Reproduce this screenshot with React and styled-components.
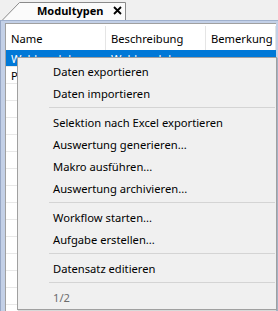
import styled, { createGlobalStyle } from "styled-components"

const GlobalStyle = createGlobalStyle`
  html, body {
    margin: 0;
    padding: 0;
    background: #f0f0f0;
    overflow: hidden;
  }
  body {
    font-family: "Noto Sans", "Open Sans", sans-serif;
    font-size: 11.2px;
    color: #000;
  }
`

const Window = styled.div`
  position: relative;
  width: 278px;
  height: 311px;
  display: flex;
  flex-direction: column;
  background: #f0f0f0;
`

const TabStrip = styled.div`
  height: 20px;
  display: flex;
  align-items: flex-end;
  padding-left: 2px;
`

const Tab = styled.div`
  position: relative;
  width: 124px;
  height: 19px;
  display: flex;
  align-items: center;
  gap: 10px;
  padding-left: 35px;
  box-sizing: border-box;
  font-weight: bold;
  font-size: 11px;

  svg.shape {
    position: absolute;
    left: 0;
    top: 0;
    z-index: 0;
  }
  span, svg.close {
    position: relative;
    z-index: 1;
  }
`

const Panel = styled.div`
  flex: 1;
  display: flex;
  background: #c3d0e7;
  border-top: 1px solid #9fb0cd;
  border-left: 1px solid #98a8c6;
  padding: 2px 2px 0 4px;
`

const Grid = styled.div`
  flex: 1;
  background: #fff;
  border-top: 1px solid #a0a0a0;
  border-left: 1px solid #a0a0a0;
  overflow: hidden;
`

const Row = styled.div`
  display: grid;
  grid-template-columns: 100px 100px 1fr;
  height: ${(p) => (p.$header ? "26px" : "17px")};
  background: ${(p) => (p.$selected ? "#0078d7" : "#fff")};
  color: ${(p) => (p.$selected ? "#fff" : "#000")};
  border-bottom: ${(p) => (p.$header ? "none" : "1px solid #e8e8e8")};
  box-sizing: border-box;
`

const Cell = styled.div`
  display: flex;
  align-items: center;
  padding-left: 5px;
  white-space: nowrap;
  overflow: hidden;
  border-right: 1px solid ${(p) => (p.$header ? "#e5e5e5" : "transparent")};
  ${(p) => p.$header && "margin: 2px 0 0;"}
`

const Menu = styled.div`
  position: absolute;
  left: 17px;
  top: 57px;
  width: 260px;
  box-sizing: border-box;
  background: #f0f0f0;
  border: 1px solid #a0a0a0;
  box-shadow: 1px 1px 1px rgba(0, 0, 0, 0.15);
  padding: 2px 0 1px;
`

const Item = styled.div`
  height: 22px;
  display: flex;
  align-items: center;
  padding-left: 35px;
  color: ${(p) => (p.$disabled ? "#6d6d6d" : "#000")};
  white-space: nowrap;
`

const Separator = styled.div`
  height: 7px;
  display: flex;
  align-items: center;
  margin: 0 1px 0 31px;

  &::after {
    content: "";
    flex: 1;
    height: 1px;
    background: #d4d4d4;
  }
`

const rows = [
  { name: "Wahlmodul", desc: "Wahlmodul", selected: true },
  { name: "Pflichtmodul", desc: "Pflichtmodul" },
  {}, {}, {}, {}, {}, {}, {}, {}, {}, {}, {}, {}, {},
]

const menu = [
  "Daten exportieren",
  "Daten importieren",
  "-",
  "Selektion nach Excel exportieren",
  "Auswertung generieren...",
  "Makro ausführen...",
  "Auswertung archivieren...",
  "-",
  "Workflow starten...",
  "Aufgabe erstellen...",
  "-",
  "Datensatz editieren",
  "-",
]

export default function App() {
  return (
    <Window>
      <GlobalStyle />
      <TabStrip>
        <Tab>
          <svg className="shape" width="124" height="19" viewBox="0 0 124 19">
            <path d="M0.5 19 L17.5 1.5 L123.5 1.5 L123.5 19" fill="#fbfbfb" stroke="#8a8a8a" />
          </svg>
          <span>Modultypen</span>
          <svg className="close" width="9" height="9" viewBox="0 0 9 9">
            <path d="M1 1 L8 8 M8 1 L1 8" stroke="#000" strokeWidth="1.8" />
          </svg>
        </Tab>
      </TabStrip>
      <Panel>
        <Grid>
          <Row $header>
            <Cell $header>Name</Cell>
            <Cell $header>Beschreibung</Cell>
            <Cell $header>Bemerkung</Cell>
          </Row>
          {rows.map((r, i) => (
            <Row key={i} $selected={r.selected}>
              <Cell>{r.name}</Cell>
              <Cell>{r.desc}</Cell>
              <Cell />
            </Row>
          ))}
        </Grid>
      </Panel>
      <Menu>
        {menu.map((m, i) =>
          m === "-" ? <Separator key={i} /> : <Item key={i}>{m}</Item>
        )}
        <Item $disabled>1/2</Item>
      </Menu>
    </Window>
  )
}
